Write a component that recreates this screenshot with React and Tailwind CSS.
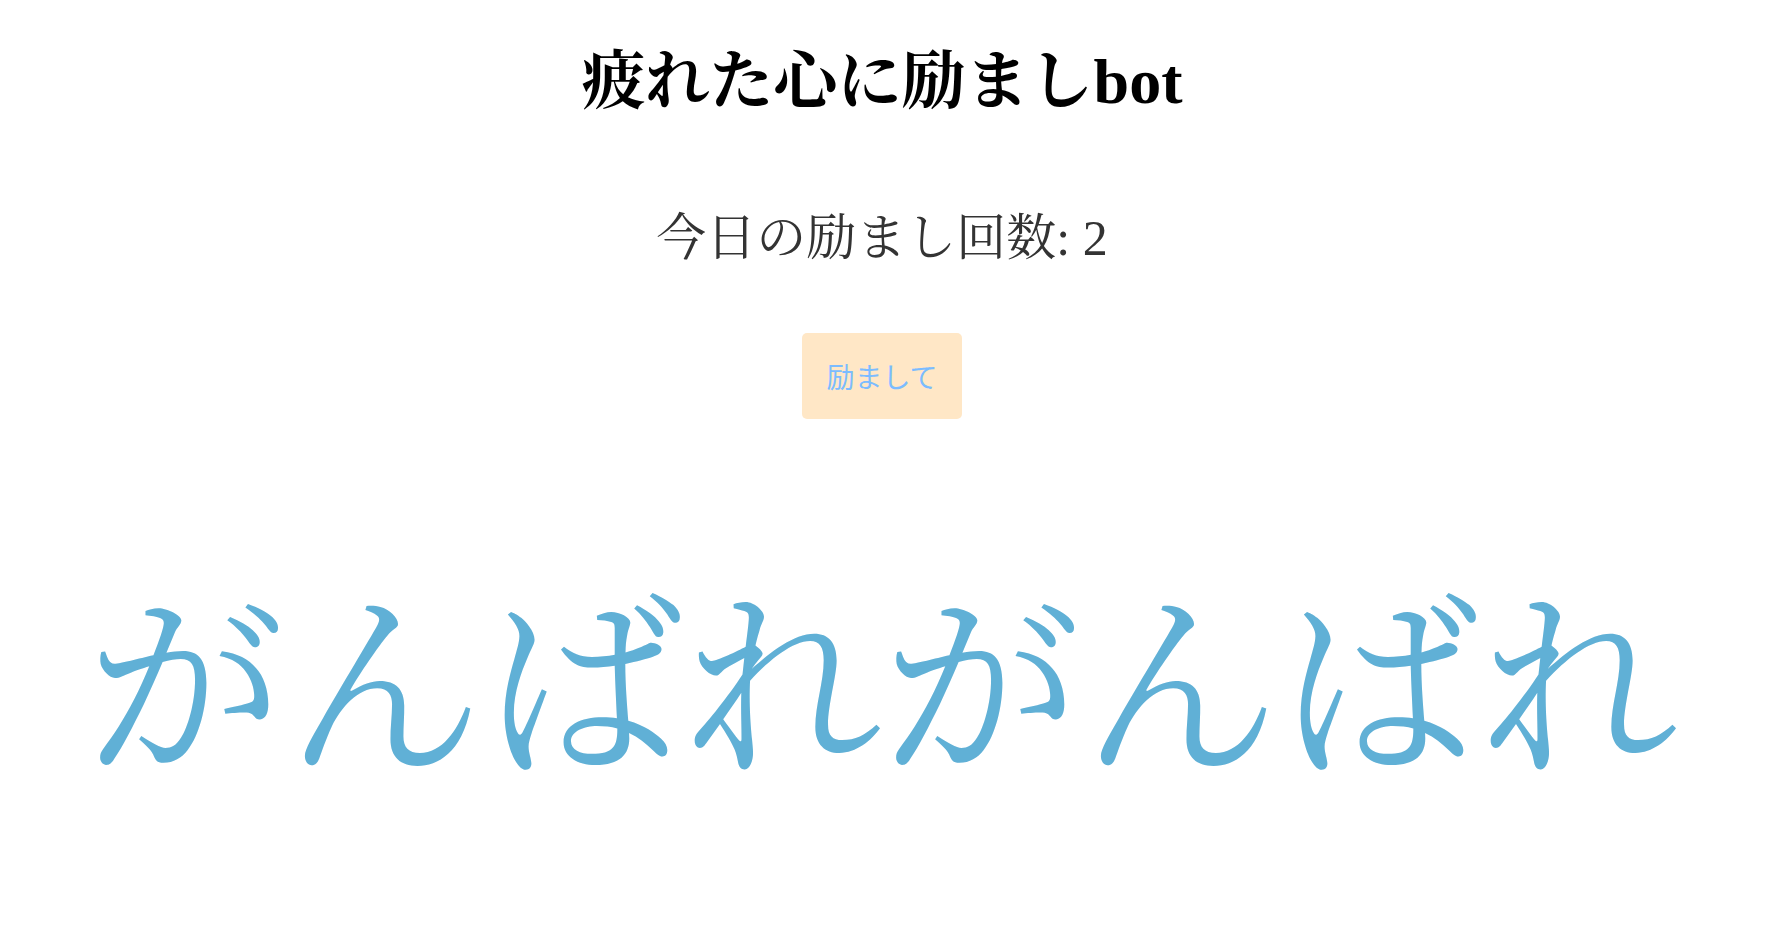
import { useState } from "react"

const serif = "font-['Liberation_Serif','Noto_Serif_CJK_JP','Noto_Sans_CJK_JP',serif]"

export default function App() {
  let [count, setCount] = useState(2)
  return (
    <div className={`min-h-screen bg-white pr-[17px] flex flex-col items-center ${serif}`}>
      <h1 className="mt-[46px] text-[64px] leading-[72px] font-bold text-black">
        疲れた心に励ましbot
      </h1>
      <p className="mt-[92px] text-[50px] leading-[56px] text-[#333]">
        今日の励まし回数: {count}
      </p>
      <button
        onClick={() => setCount(count + 1)}
        className="mt-[67px] w-[160px] h-[86px] rounded-[5px] bg-[#ffe7c6] text-[#7bbcff] text-[28px] font-['Noto_Sans_CJK_JP',sans-serif]">
        励まして
      </button>
      <div className="mt-[163px] text-[199px] leading-[220px] text-[#60b0d6] whitespace-nowrap">
        がんばれがんばれ
      </div>
    </div>
  )
}
